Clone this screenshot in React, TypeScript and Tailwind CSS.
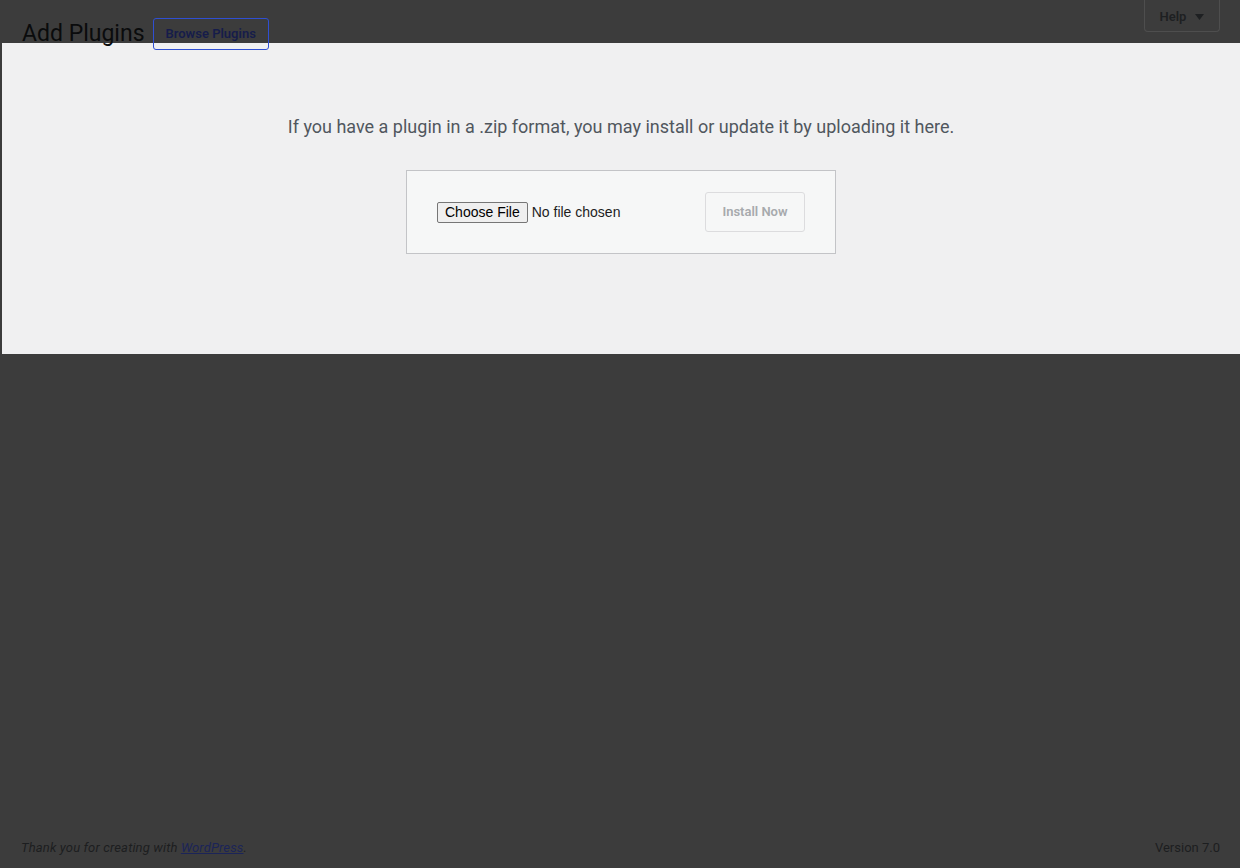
import React from "react";

const roboto = { fontFamily: "Roboto, 'Liberation Sans', sans-serif" };
const arial = { fontFamily: "'Liberation Sans', Arial, sans-serif" };

function Header() {
  return (
    <div className="relative z-10 flex h-[43px] items-start pl-[22px] pr-[20px]">
      <h1 className="mt-[19px] text-[23px] font-normal leading-[29px] text-[#0a0b0c]">Add Plugins</h1>
      <a
        href="#"
        className="ml-[8px] mt-[18px] flex h-[32px] items-center rounded-[3px] border border-[#2f4fd2] px-[12px] text-[13px] font-semibold text-[#161c4a]"
      >
        Browse Plugins
      </a>
      <button className="ml-auto flex h-[32px] w-[76px] items-center justify-center gap-[9px] rounded-b-[4px] border border-t-0 border-[#4e4e4e] pt-[2px] text-[13px] font-semibold text-[#1e2022]">
        Help
        <svg width="9" height="6" viewBox="0 0 9 6" className="mt-[1px]">
          <path d="M0 0h9L4.5 6z" fill="#1e2022" />
        </svg>
      </button>
    </div>
  );
}

function FilePicker() {
  return (
    <label className="flex items-center text-[14px] text-[#1d2327]" style={arial}>
      <input type="file" className="hidden" />
      <span className="flex h-[21px] items-center rounded-[2px] border border-[#767676] bg-[#efefef] px-[7px] text-black">
        Choose File
      </span>
      <span className="ml-[4px] text-[#1d1d1d]">No file chosen</span>
    </label>
  );
}

function UploadPanel() {
  return (
    <div className="ml-[2px] flex h-[311px] flex-col items-center bg-[#f0f0f1] pt-[72px]">
      <p className="text-[18px] leading-[24px] text-[#50575e]">
        If you have a plugin in a .zip format, you may install or update it by uploading it here.
      </p>
      <form className="mt-[31px] flex h-[84px] w-[430px] items-center justify-between border border-[#c3c4c7] bg-[#f6f7f7] pl-[30px] pr-[30px]">
        <FilePicker />
        <button
          type="button"
          disabled
          className="h-[40px] w-[100px] rounded-[3px] border border-[#dcdcde] bg-[#f6f7f7] text-[13px] font-semibold text-[#a7aaad]"
        >
          Install Now
        </button>
      </form>
    </div>
  );
}

function Footer() {
  return (
    <div className="mt-auto flex items-center justify-between pb-[11px] pl-[21px] pr-[20px] text-[13px] text-[#1c1e20]">
      <p className="italic tracking-[0.15px]">
        Thank you for creating with{" "}
        <a href="#" className="text-[#1b2458] underline">
          WordPress
        </a>
        .
      </p>
      <p>Version 7.0</p>
    </div>
  );
}

export default function App() {
  return (
    <div className="flex min-h-[868px] flex-col bg-[#3c3c3c]" style={roboto}>
      <Header />
      <UploadPanel />
      <Footer />
    </div>
  );
}
